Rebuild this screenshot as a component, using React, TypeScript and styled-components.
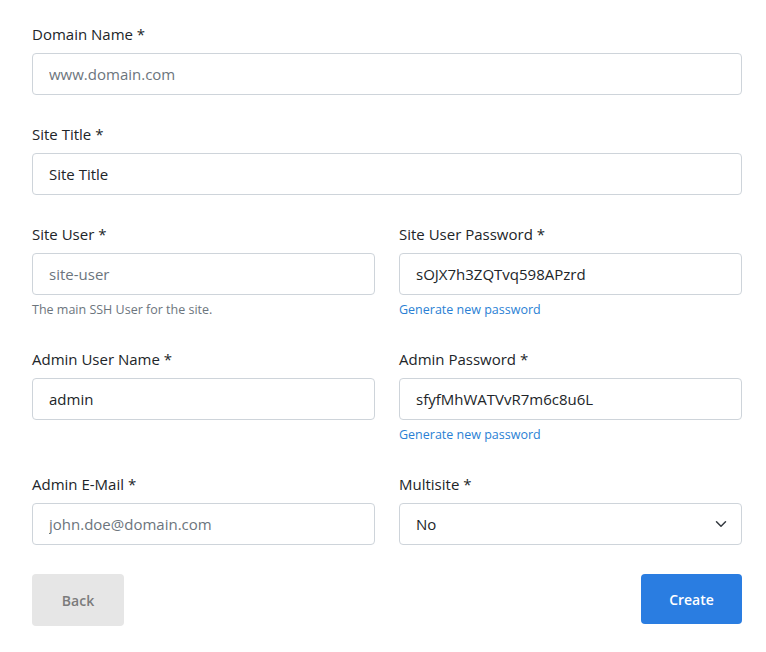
import { createGlobalStyle } from "styled-components"
import styled from "styled-components"

const GlobalStyle = createGlobalStyle`
  html, body {
    margin: 0;
    padding: 0;
    background: #ffffff;
  }
  body {
    font-family: "Open Sans", "Noto Sans", "Liberation Sans", sans-serif;
    color: #212529;
  }
  * {
    box-sizing: border-box;
  }
`

const ChevronDown = () => (
  <svg width="12" height="12" viewBox="0 0 16 16" fill="none">
    <path
      d="M2 5l6 6 6-6"
      stroke="#343a40"
      strokeWidth="2"
      strokeLinecap="round"
      strokeLinejoin="round"
    />
  </svg>
)

export default function App() {
  return (
    <>
      <GlobalStyle />
      <Page>
        <Form onSubmit={(e) => e.preventDefault()}>
          <Group>
            <Label>Domain Name *</Label>
            <Input placeholder="www.domain.com" />
          </Group>
          <Group>
            <Label>Site Title *</Label>
            <Input defaultValue="Site Title" />
          </Group>
          <Row>
            <Group>
              <Label>Site User *</Label>
              <Input placeholder="site-user" />
              <Help>The main SSH User for the site.</Help>
            </Group>
            <Group>
              <Label>Site User Password *</Label>
              <Input defaultValue="sOJX7h3ZQTvq598APzrd" />
              <Help as="a" href="#" $link>
                Generate new password
              </Help>
            </Group>
          </Row>
          <Row>
            <Group>
              <Label>Admin User Name *</Label>
              <Input defaultValue="admin" />
            </Group>
            <Group>
              <Label>Admin Password *</Label>
              <Input defaultValue="sfyfMhWATVvR7m6c8u6L" />
              <Help as="a" href="#" $link>
                Generate new password
              </Help>
            </Group>
          </Row>
          <Row>
            <Group>
              <Label>Admin E-Mail *</Label>
              <Input placeholder="john.doe@domain.com" />
            </Group>
            <Group>
              <Label>Multisite *</Label>
              <SelectWrap>
                <Select defaultValue="no">
                  <option value="no">No</option>
                  <option value="yes">Yes</option>
                </Select>
                <Chevron>
                  <ChevronDown />
                </Chevron>
              </SelectWrap>
            </Group>
          </Row>
          <Actions>
            <BackButton type="button">Back</BackButton>
            <CreateButton type="submit">Create</CreateButton>
          </Actions>
        </Form>
      </Page>
    </>
  )
}

const Page = styled.div`
  padding: 22px 24px 24px 32px;
  width: 766px;
`

const Form = styled.form`
  width: 710px;
  display: flex;
  flex-direction: column;
`

const Row = styled.div`
  display: grid;
  grid-template-columns: 1fr 1fr;
  column-gap: 24px;
`

const Group = styled.div`
  display: flex;
  flex-direction: column;
  align-items: flex-start;
  margin-bottom: 27px;
`

const Label = styled.label`
  font-size: 15px;
  line-height: 24px;
  margin-bottom: 7px;
  color: #212529;
`

const Input = styled.input`
  width: 100%;
  height: 42px;
  padding: 0 16px;
  border: 1px solid #ced4da;
  border-radius: 4px;
  font-family: inherit;
  font-size: 15px;
  color: #212529;
  background: #ffffff;
  outline: none;

  &::placeholder {
    color: #6c757d;
  }
`

const Help = styled.small<{ $link?: boolean }>`
  margin-top: 5px;
  font-size: 12.5px;
  line-height: 20px;
  color: ${({ $link }) => ($link ? "#2a7fd4" : "#6c757d")};
  text-decoration: none;
`

const SelectWrap = styled.div`
  position: relative;
  width: 100%;
`

const Select = styled.select`
  width: 100%;
  height: 42px;
  padding: 0 40px 0 16px;
  border: 1px solid #ced4da;
  border-radius: 4px;
  font-family: inherit;
  font-size: 15px;
  color: #212529;
  background: #ffffff;
  appearance: none;
  outline: none;
`

const Chevron = styled.span`
  position: absolute;
  right: 15px;
  top: 50%;
  transform: translateY(-50%);
  display: flex;
  pointer-events: none;
`

const Actions = styled.div`
  display: flex;
  justify-content: space-between;
  align-items: flex-start;
  margin-top: 2px;
`

const BaseButton = styled.button`
  border: none;
  border-radius: 4px;
  font-family: inherit;
  font-size: 14px;
  font-weight: 600;
  cursor: pointer;
`

const BackButton = styled(BaseButton)`
  width: 92px;
  height: 52px;
  background: #e6e6e6;
  color: #7b7b7b;
`

const CreateButton = styled(BaseButton)`
  width: 101px;
  height: 50px;
  background: #2a7de1;
  color: #ffffff;
`
